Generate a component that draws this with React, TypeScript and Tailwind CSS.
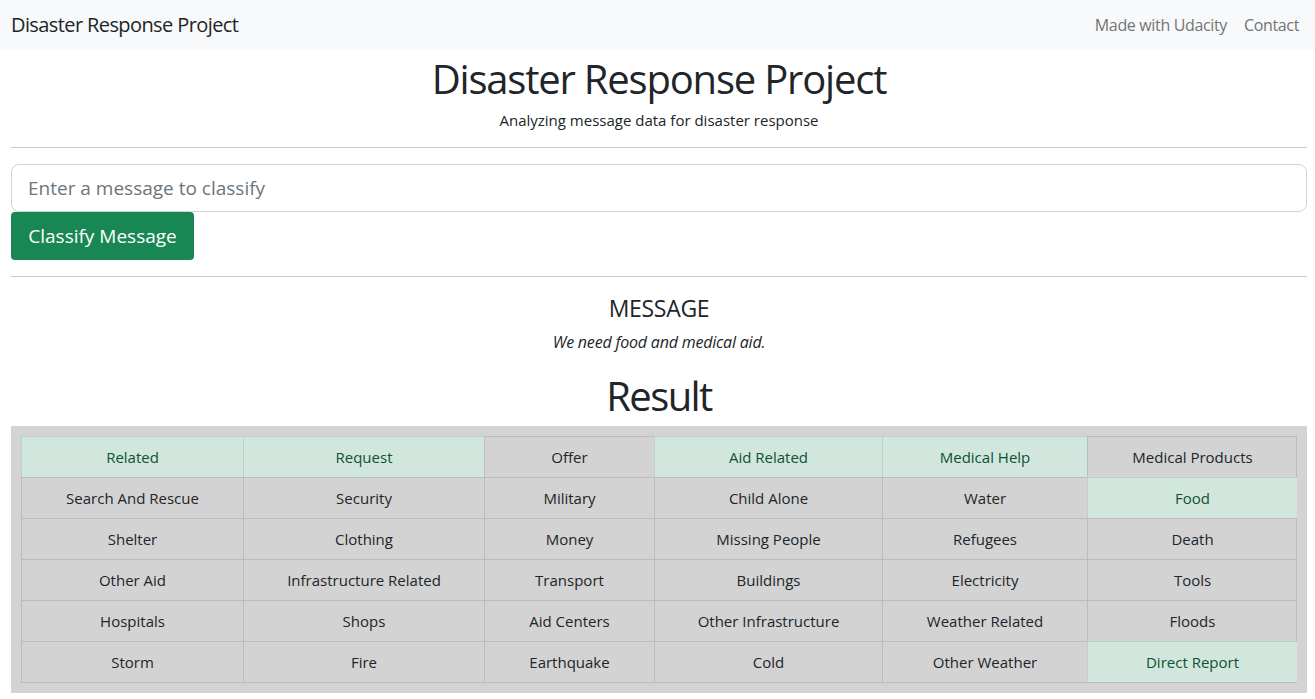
import React from "react";

const rows: [string, boolean][][] = [
  [["Related", true], ["Request", true], ["Offer", false], ["Aid Related", true], ["Medical Help", true], ["Medical Products", false]],
  [["Search And Rescue", false], ["Security", false], ["Military", false], ["Child Alone", false], ["Water", false], ["Food", true]],
  [["Shelter", false], ["Clothing", false], ["Money", false], ["Missing People", false], ["Refugees", false], ["Death", false]],
  [["Other Aid", false], ["Infrastructure Related", false], ["Transport", false], ["Buildings", false], ["Electricity", false], ["Tools", false]],
  [["Hospitals", false], ["Shops", false], ["Aid Centers", false], ["Other Infrastructure", false], ["Weather Related", false], ["Floods", false]],
  [["Storm", false], ["Fire", false], ["Earthquake", false], ["Cold", false], ["Other Weather", false], ["Direct Report", true]],
];

export default function App() {
  return (
    <div className="min-h-screen bg-white text-[#212529] font-['Open_Sans',sans-serif]">
      {/* navbar */}
      <nav className="h-[50px] bg-[#f8f9fa] flex items-center justify-between pl-[11px] pr-[16px]">
        <span className="text-[20px] leading-[30px] tracking-[-0.6px]">Disaster Response Project</span>
        <div className="flex gap-[17px] text-[16px] text-[#737475] tracking-[-0.35px]">
          <span>Made with Udacity</span>
          <span>Contact</span>
        </div>
      </nav>

      <div className="pl-[11px] pr-[8px]">
        <div className="text-center">
          <h1 className="mt-[5px] text-[40px] leading-[48px] tracking-[-1.2px]">Disaster Response Project</h1>
          <p className="mt-[5px] text-[15px] leading-[24px]">Analyzing message data for disaster response</p>
        </div>
        <hr className="mt-[15px] border-t border-[#c8c9ca]" />

        <div className="mt-[16px]">
          <div className="h-[48px] border border-[#ced4da] rounded-[8px] flex items-center px-[16px] text-[19px] text-[#6c757d]">
            Enter a message to classify
          </div>
          <button className="h-[48px] w-[183px] bg-[#198754] text-white rounded-[4px] text-[19px]">
            Classify Message
          </button>
        </div>
        <hr className="mt-[16px] border-t border-[#c8c9ca]" />

        <div className="text-center">
          <h4 className="mt-[17px] text-[23px] leading-[29px] tracking-[-0.3px]">MESSAGE</h4>
          <p className="mt-[7px] text-[16px] leading-[24px] italic tracking-[-0.2px]">We need food and medical aid.</p>
          <h1 className="mt-[18px] text-[40px] leading-[48px] tracking-[-1.6px]">Result</h1>
        </div>

        <div className="mt-[6px] bg-[#d3d3d3] p-[10px]">
          <div className="grid grid-cols-[222px_241px_170px_228px_205px_210px] border-r border-b border-[#bcbcbc]">
            {rows.flat().map(([label, on], i) => (
              <div
                key={i}
                className={
                  on
                    ? "h-[41px] flex items-center justify-center border-l border-t border-[#bcd0c7] bg-[#d1e7dd] text-[#0f5132] text-[15px]"
                    : "h-[41px] flex items-center justify-center border-l border-t border-[#bcbcbc] text-[15px]"
                }
              >
                {label}
              </div>
            ))}
          </div>
        </div>
      </div>
    </div>
  );
}
